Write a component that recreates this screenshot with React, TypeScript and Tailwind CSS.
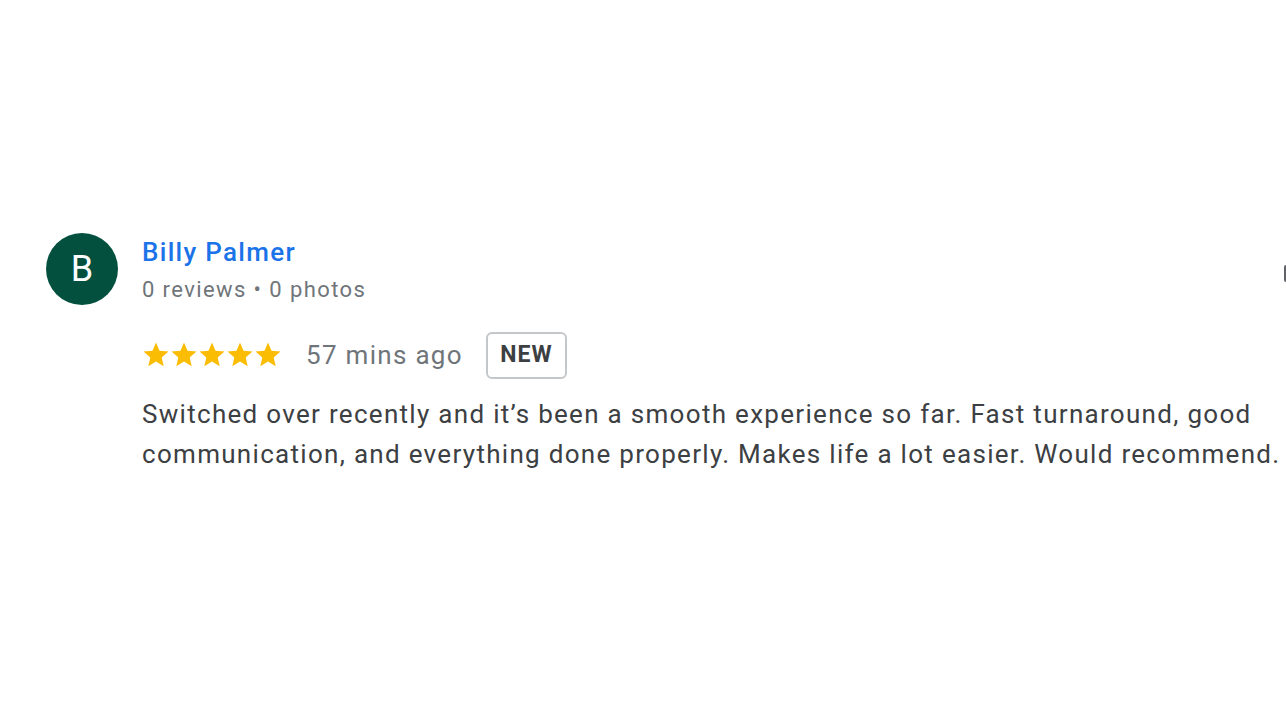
const Star = () => (
  <svg viewBox="0 0 24 24" className="w-[30px] h-[30px] -mx-[1px]" fill="#fbbc04">
    <path d="M12 17.27L18.18 21l-1.64-7.03L22 9.24l-7.19-.61L12 2 9.19 8.63 2 9.24l5.46 4.73L5.82 21z" />
  </svg>
);

const App = () => (
  <div className="relative w-[1286px] h-[723px] bg-white overflow-hidden" style={{ fontFamily: 'Roboto, "Liberation Sans", sans-serif' }}>
    <div className="flex gap-6 pl-[46px] pt-[233px] w-[1400px]">
      {/* Avatar */}
      <div className="w-[72px] h-[72px] shrink-0 rounded-full bg-[#03503f] flex items-center justify-center text-white text-[36px] leading-none">
        B
      </div>
      <div className="flex flex-col">
        <div className="flex items-start justify-between w-[1158px]">
          <div className="flex flex-col pt-[1px]">
            <div className="text-[26px] font-medium text-[#1a73e8] leading-[36px] tracking-[1.3px]">Billy Palmer</div>
            <div className="mt-[5px] text-[22px] text-[#70757a] leading-[30px] tracking-[1.4px]">0 reviews • 0 photos</div>
          </div>
          <div className="mt-[32px] w-[16px] h-[17px] border-2 border-[#5f6368] rounded-[2px]" />
        </div>
        <div className="flex items-center mt-[26px] h-[48px]">
          <div className="flex">
            <Star />
            <Star />
            <Star />
            <Star />
            <Star />
          </div>
          <span className="ml-[24px] text-[26px] text-[#70757a] tracking-[1.3px]">57 mins ago</span>
          <span className="ml-[23px] h-[47px] w-[81px] flex items-center justify-center border-2 border-[#c4c7ca] rounded-[6px] text-[23px] font-bold text-[#3c4043] tracking-[1px]">
            NEW
          </span>
        </div>
        <p className="mt-[15px] w-[1145px] text-[26px] leading-[40px] text-[#3c4043] tracking-[1.3px]">
          Switched over recently and it’s been a smooth experience so far. Fast turnaround, good communication, and everything done properly. Makes life a lot easier. Would recommend.
        </p>
      </div>
    </div>
  </div>
);

export default App;
